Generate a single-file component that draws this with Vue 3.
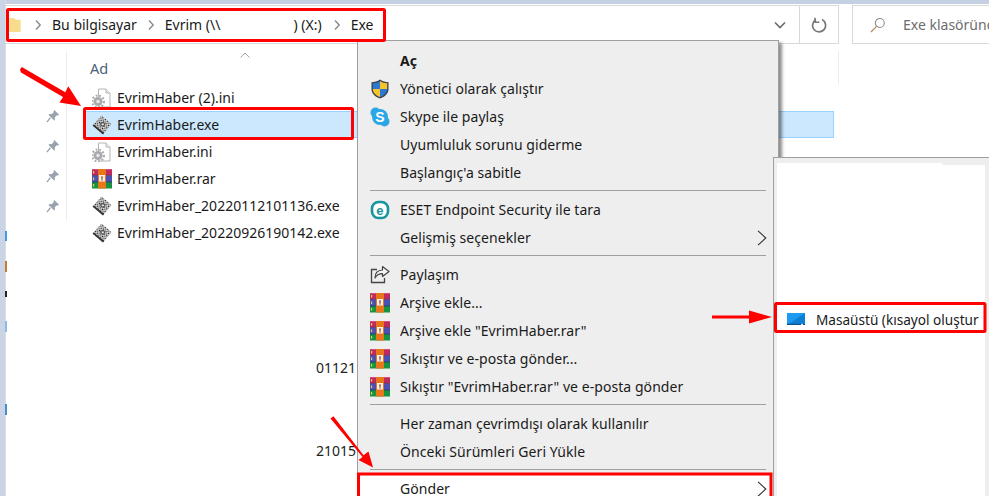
<script setup>
const files = [
  { name: 'EvrimHaber (2).ini', icon: 'ini' },
  { name: 'EvrimHaber.exe', icon: 'exe', selected: true },
  { name: 'EvrimHaber.ini', icon: 'ini' },
  { name: 'EvrimHaber.rar', icon: 'rar' },
  { name: 'EvrimHaber_20220112101136.exe', icon: 'exe' },
  { name: 'EvrimHaber_20220926190142.exe', icon: 'exe' },
]
const menu = [
  [
    { label: 'Aç', bold: true },
    { label: 'Yönetici olarak çalıştır', icon: 'shield' },
    { label: 'Skype ile paylaş', icon: 'skype' },
    { label: 'Uyumluluk sorunu giderme' },
    { label: "Başlangıç'a sabitle" },
  ],
  [
    { label: 'ESET Endpoint Security ile tara', icon: 'eset' },
    { label: 'Gelişmiş seçenekler', more: true },
  ],
  [
    { label: 'Paylaşım', icon: 'share' },
    { label: 'Arşive ekle...', icon: 'rar' },
    { label: 'Arşive ekle "EvrimHaber.rar"', icon: 'rar' },
    { label: 'Sıkıştır ve e-posta gönder...', icon: 'rar' },
    { label: 'Sıkıştır "EvrimHaber.rar" ve e-posta gönder', icon: 'rar' },
  ],
  [
    { label: 'Her zaman çevrimdışı olarak kullanılır' },
    { label: 'Önceki Sürümleri Geri Yükle' },
  ],
  [{ label: 'Gönder', more: true, hot: true }],
]
const pins = [1, 2, 3, 4]
</script>

<template>
  <div class="page">
    <svg class="defs" width="0" height="0" aria-hidden="true">
      <defs>
        <pattern id="dither" width="3" height="3" patternUnits="userSpaceOnUse" patternTransform="rotate(35 10 10)">
          <rect width="3" height="3" fill="#fff" />
          <rect width="1.300" height="1.300" fill="#000" />
          <rect x="1.500" y="1.500" width="1.300" height="1.300" fill="#111" />
        </pattern>
        <symbol id="i-exe" viewBox="0 0 20 20">
          <path d="M9.500 .5 19.500 9 11 19.500 .5 10.500Z" fill="url(#dither)" />
          <path d="M.5 10.500 2 9.500l9 7.500 1 1-1 1.500Z" fill="#333" />
          <path d="M8 8l3.500-1.500 2 2.500-2 3-3-1.500Z" fill="#555" />
          <path d="M9.500 8.800l1.800-.6.700 1-.9 1.400-1.300-.6Z" fill="#eee" />
        </symbol>
        <symbol id="i-ini" viewBox="0 0 20 20">
          <path d="M6.500 1H14l4 4v14H6.500Z" fill="#fff" stroke="#b4b4b4" />
          <path d="M14 1v4h4" fill="#eee" stroke="#b4b4b4" />
          <circle cx="6" cy="13.500" r="4.600" fill="#a8aaad" />
          <circle cx="6" cy="13.500" r="6" fill="none" stroke="#a8aaad" stroke-width="2" stroke-dasharray="1.800 1.800" />
          <circle cx="6" cy="13.500" r="1.800" fill="#e6e6e6" />
        </symbol>
        <symbol id="i-rar" viewBox="0 0 20 20">
          <rect y="0" width="20" height="6.500" fill="#c02a5e" />
          <rect y="0" width="20" height="1" fill="#cf5080" />
          <rect y="6.500" width="20" height="6.500" fill="#4c50b2" />
          <rect y="13" width="20" height="6.500" fill="#17923f" />
          <rect y="5.800" width="20" height=".8" fill="#5b2a5a" />
          <rect y="12.600" width="20" height=".8" fill="#23406a" />
          <rect x="1" y="2" width="1.200" height="2.600" fill="#e8c850" />
          <rect x="1" y="8.500" width="1.200" height="2.600" fill="#e8c850" />
          <rect x="1" y="15" width="1.200" height="2.600" fill="#e8c850" />
          <rect x="6" y="0" width="8" height="19.500" fill="#e8761a" />
          <rect x="7" y="6" width="6" height="6.500" fill="#f6f3ee" />
          <rect x="9" y="7.500" width="2" height="4" fill="#b0482a" />
          <rect x="9.600" y="8.500" width=".8" height="3" fill="#fff" />
        </symbol>
        <symbol id="i-shield" viewBox="0 0 20 20">
          <path d="M10 .5C7.500 2.500 4.500 3.200 1.500 3.200v7c0 4.300 3.500 7.500 8.500 9.300 5-1.800 8.500-5 8.500-9.300v-7C15.500 3.200 12.500 2.500 10 .5Z" fill="#3a3f4a" />
          <path d="M10 2v8H2.800V4.300C5.500 4.200 8 3.400 10 2Z" fill="#2a78d0" />
          <path d="M10 2c2 1.400 4.500 2.200 7.200 2.300V10H10Z" fill="#f5c32c" />
          <path d="M2.800 10H10v8.100C5.800 16.500 2.800 13.800 2.800 10Z" fill="#f5c32c" />
          <path d="M17.200 10H10v8.100c4.200-1.600 7.200-4.300 7.200-8.100Z" fill="#2a78d0" />
        </symbol>
        <symbol id="i-skype" viewBox="0 0 20 20">
          <circle cx="5.500" cy="5.500" r="5" fill="#2ba6e6" />
          <circle cx="14.500" cy="14.500" r="5" fill="#2ba6e6" />
          <circle cx="10" cy="10" r="8" fill="#2ba6e6" />
          <text x="10" y="15" text-anchor="middle" font-family="Liberation Sans, sans-serif" font-weight="700" font-size="14" fill="#fff">S</text>
        </symbol>
        <symbol id="i-eset" viewBox="0 0 20 20">
          <rect x="2" y="2" width="16" height="16" rx="6.500" fill="#fff" stroke="#16969c" stroke-width="2.600" />
          <text x="10" y="14.500" text-anchor="middle" font-family="Liberation Sans, sans-serif" font-weight="700" font-size="13" fill="#16969c">e</text>
        </symbol>
        <symbol id="i-share" viewBox="0 0 20 20">
          <path d="M7 4.500H1.500v13h13V13" fill="none" stroke="#444" stroke-width="1.300" />
          <path d="M12.500 1.500 19 6.500l-6.500 5V8.600C9 8.600 6.500 10 5 13c0-5 3-7.800 7.500-8Z" fill="#f4f4f4" stroke="#444" stroke-width="1.200" stroke-linejoin="round" />
        </symbol>
        <symbol id="i-pin" viewBox="0 0 16 16">
          <path d="M9.500 1 15 6.500l-1.500 1-1-.5L10 9.500c.5 1.500.3 2.800-.5 3.800L2.700 6.500c1-.8 2.300-1 3.800-.5L9 3.500l-.5-1Z" fill="#9aa3ad" />
          <path d="M5 10 1 15" stroke="#9aa3ad" stroke-width="1.500" />
        </symbol>
      </defs>
    </svg>

    <div class="edge">
      <i class="tick t1"></i><i class="tick t2"></i><i class="tick t3"></i><i class="tick t4"></i><i class="tick t5"></i>
    </div>

    <div class="window">
      <header class="toolbar">
        <div class="address">
          <nav class="crumbs">
            <svg class="folder" viewBox="0 0 12 16" width="12" height="15">
              <path d="M0 1h5l2 2h5v13H0Z" fill="#f7dc8c" />
            </svg>
            <svg class="sep-chev" viewBox="0 0 8 12" width="8" height="12"><path d="M2 1.500 6.200 6 2 10.500" fill="none" stroke="#8a8a8a" stroke-width="1.400" /></svg>
            <span class="crumb">Bu bilgisayar</span>
            <svg class="sep-chev" viewBox="0 0 8 12" width="8" height="12"><path d="M2 1.500 6.200 6 2 10.500" fill="none" stroke="#8a8a8a" stroke-width="1.400" /></svg>
            <span class="crumb drive">Evrim (\\<span class="blank"></span>) (X:)</span>
            <svg class="sep-chev" viewBox="0 0 8 12" width="8" height="12"><path d="M2 1.500 6.200 6 2 10.500" fill="none" stroke="#8a8a8a" stroke-width="1.400" /></svg>
            <span class="crumb">Exe</span>
          </nav>
          <div class="drop">
            <svg viewBox="0 0 12 8" width="12" height="8"><path d="M1 1.500l5 5 5-5" fill="none" stroke="#6a6a6a" stroke-width="1.600" /></svg>
          </div>
          <div class="refresh">
            <svg viewBox="0 0 16 16" width="16" height="16"><path d="M4.800 2.800A6.500 6.500 0 1 0 11 2.600" fill="none" stroke="#777" stroke-width="1.700" /><path d="M4 .8v4.400h4.400" fill="none" stroke="#777" stroke-width="1.600" /></svg>
          </div>
        </div>
        <div class="search">
          <svg viewBox="0 0 16 16" width="16" height="16"><circle cx="9.800" cy="6" r="4.500" fill="none" stroke="#8c8c8c" stroke-width="1.100" /><path d="M6.500 9.300 1 15" stroke="#b8875c" stroke-width="1.200" /></svg>
          <span>Exe klasöründ</span>
        </div>
      </header>

      <section class="body">
        <aside class="nav">
          <svg v-for="p in pins" :key="p" class="pin" width="14" height="14"><use href="#i-pin" /></svg>
        </aside>
        <main class="list">
          <div class="columns">
            <span class="col">Ad</span>
            <svg class="caret" viewBox="0 0 10 6" width="10" height="6"><path d="M.5 5.500 5 1l4.500 4.500" fill="none" stroke="#a5a5a5" /></svg>
            <i class="col-line"></i>
          </div>
          <div v-for="f in files" :key="f.name" class="file" :class="{ selected: f.selected }">
            <svg class="file-icon" width="20" height="20"><use :href="'#i-' + f.icon" /></svg>
            <span>{{ f.name }}</span>
          </div>
          <div class="behind b1">01121</div>
          <div class="behind b2">21015</div>
        </main>
      </section>
    </div>

    <div class="menu">
      <template v-for="(group, g) in menu" :key="g">
        <div v-if="g" class="rule"></div>
        <div v-for="item in group" :key="item.label" class="item" :class="{ bold: item.bold, hot: item.hot }">
          <span class="slot">
            <svg v-if="item.icon" width="20" height="20"><use :href="'#i-' + item.icon" /></svg>
          </span>
          <span class="label">{{ item.label }}</span>
          <svg v-if="item.more" class="more" viewBox="0 0 10 16" width="10" height="16"><path d="M1 .8 8.800 8 1 15.200" fill="none" stroke="#333" stroke-width="1.100" /></svg>
        </div>
      </template>
    </div>

    <div class="submenu">
      <div class="sub-inner">
        <div class="sub-item">
          <svg viewBox="0 0 18 12" width="18" height="12">
            <rect width="18" height="12" fill="#1e9bf0" />
            <path d="M0 12 18 0v12Z" fill="#0f7fd6" />
            <rect y="10.800" width="18" height="1.200" fill="#0b4f8c" />
            <rect x="14" y="10.800" width="2" height="1.200" fill="#cfe8fa" />
          </svg>
          <span>Masaüstü (kısayol oluştur</span>
        </div>
      </div>
    </div>

    <svg class="marks" viewBox="0 0 989 496" width="989" height="496">
      <g fill="none" stroke="#f00" stroke-width="3">
        <rect x="7.500" y="9.500" width="377" height="31" rx="1" />
        <rect x="84.500" y="108.500" width="268" height="30" rx="1" />
        <rect x="775.500" y="303.500" width="209.500" height="28" rx="1" />
        <path d="M358.500 497V474h412.500v23" />
      </g>
      <g fill="#f00">
        <path d="M20 69.500l1.800-2.600 43.500 25.300 3-6L81 106l-21.500-3.500 3.500-5.600L21 72.500Z" />
        <path d="M712 315.500h37v-5l23 6.500-23 6.500v-5h-37Z" />
        <path d="M330.500 418.500l3-2.200 30 39 5-3.700 4.500 16-14.500-7.500 4-3.200-32-38.400Z" />
      </g>
    </svg>
  </div>
</template>

<style>
html, body { margin: 0; background: #fff; overflow: hidden; }
</style>

<style scoped>
.page {
  position: relative;
  width: 989px;
  height: 496px;
  overflow: hidden;
  background: #fff;
  font-family: "Noto Sans", "Open Sans", sans-serif;
  font-size: 14px;
  color: #1a1a1a;
  display: flex;
  flex-direction: column;
}
.defs { position: absolute; }
.edge {
  position: absolute;
  left: 0;
  top: 0;
  width: 5px;
  height: 496px;
  background: #c9d4e6;
  border-right: 1px solid #dcdcdc;
}
.tick { position: absolute; left: 5px; width: 2px; }
.t1 { top: 231px; height: 10px; background: #3d9be8; }
.t2 { top: 261px; height: 11px; background: #c77a2c; }
.t3 { top: 291px; height: 6px; background: #222; }
.t4 { top: 321px; height: 11px; background: #8cbbe6; }
.t5 { top: 404px; height: 11px; background: #4a8cc8; }
.window { margin-left: 6px; display: flex; flex-direction: column; flex: 1; background: #fff; }
.window::before { content: ""; height: 4px; margin-left: -6px; background: #c5d0e3; }
.toolbar { display: flex; height: 40px; padding-top: 1px; box-sizing: border-box; }
.address {
  flex: none;
  width: 833px;
  height: 39px;
  box-sizing: border-box;
  border: 1px solid #d9d9d9;
  border-left: 0;
  display: flex;
  align-items: center;
}
.crumbs { flex: 1; display: flex; align-items: center; height: 100%; padding-left: 3px; }
.folder { margin-right: 13px; }
.sep-chev { margin-right: 10px; }
.crumb { margin-right: 10px; white-space: nowrap; }
.crumb.drive { margin-right: 11px; }
.blank { display: inline-block; width: 73px; }
.drop { width: 38px; display: flex; justify-content: center; }
.refresh {
  width: 38px;
  height: 100%;
  border-left: 1px solid #d9d9d9;
  display: flex;
  align-items: center;
  justify-content: center;
}
.search {
  margin-left: 13px;
  flex: 1;
  min-width: 0;
  height: 39px;
  box-sizing: border-box;
  border: 1px solid #d9d9d9;
  border-right: 0;
  display: flex;
  align-items: center;
  padding-left: 17px;
  gap: 17px;
  color: #6d6d6d;
  white-space: nowrap;
}
.search svg { flex: none; }
.body { display: flex; flex: 1; }
.nav {
  width: 60px;
  margin-top: 7px;
  border-right: 1px solid #ececec;
  display: flex;
  flex-direction: column;
  align-items: flex-end;
  gap: 16px;
  padding-top: 58px;
  height: 112px;
}
.pin { margin-right: 6px; }
.list { flex: 1; padding-left: 17px; position: relative; }
.columns { height: 40px; position: relative; display: flex; align-items: flex-end; padding-bottom: 6px; box-sizing: border-box; }
.col { padding-left: 6px; color: #4c607a; font-size: 14.5px; line-height: 20px; }
.caret { position: absolute; left: 156px; top: 8px; }
.col-line { position: absolute; left: 754px; top: 7px; width: 1px; height: 33px; background: #ececec; }
.file {
  width: 750px;
  height: 27px;
  box-sizing: border-box;
  display: flex;
  align-items: center;
  gap: 5px;
  padding-left: 8px;
  white-space: nowrap;
}
.file.selected { background: #cce8ff; outline: 1px solid #99d1ff; outline-offset: -1px; }
.file-icon { flex: none; }
.behind { position: absolute; left: 249px; color: #222; white-space: nowrap; }
.b1 { top: 314px; }
.b2 { top: 397px; }
.menu {
  position: absolute;
  left: 357px;
  top: 40px;
  width: 422px;
  height: 456px;
  box-sizing: border-box;
  background: #eee;
  border: 1px solid #a0a0a0;
  border-bottom: 0;
  padding-top: 6px;
  box-shadow: 3px 3px 3px rgba(0, 0, 0, 0.45);
  overflow: hidden;
  letter-spacing: 0.06px;
}
.rule { height: 1px; margin: 3px 12px 5px 12px; background: #a0a0a0; }
.item { height: 28px; display: flex; align-items: center; position: relative; white-space: nowrap; }
.item .label { margin-bottom: 2px; }
.item.bold .label { font-weight: 700; }
.item.hot { background: #fff; }
.slot { width: 42px; flex: none; display: flex; justify-content: flex-start; padding-left: 12px; box-sizing: border-box; }
.more { position: absolute; left: 399px; top: 6px; }
.submenu {
  position: absolute;
  left: 773px;
  top: 157px;
  width: 216px;
  height: 339px;
  box-sizing: border-box;
  background: #eee;
  border-top: 1px solid #a0a0a0;
  border-left: 1px solid #a0a0a0;
  padding: 5px 4px 0 3px;
}
.sub-inner { position: relative; background: #fff; height: 100%; padding-top: 141px; box-sizing: border-box; }
.sub-inner::before { content: ""; position: absolute; right: 0; top: 0; width: 43px; height: 2px; background: #eee; }
.sub-item { display: flex; align-items: center; height: 30px; padding-left: 10px; gap: 11px; white-space: nowrap; font-size: 13.6px; }
.sub-item svg { flex: none; }
.marks { position: absolute; left: 0; top: 0; pointer-events: none; }
</style>
